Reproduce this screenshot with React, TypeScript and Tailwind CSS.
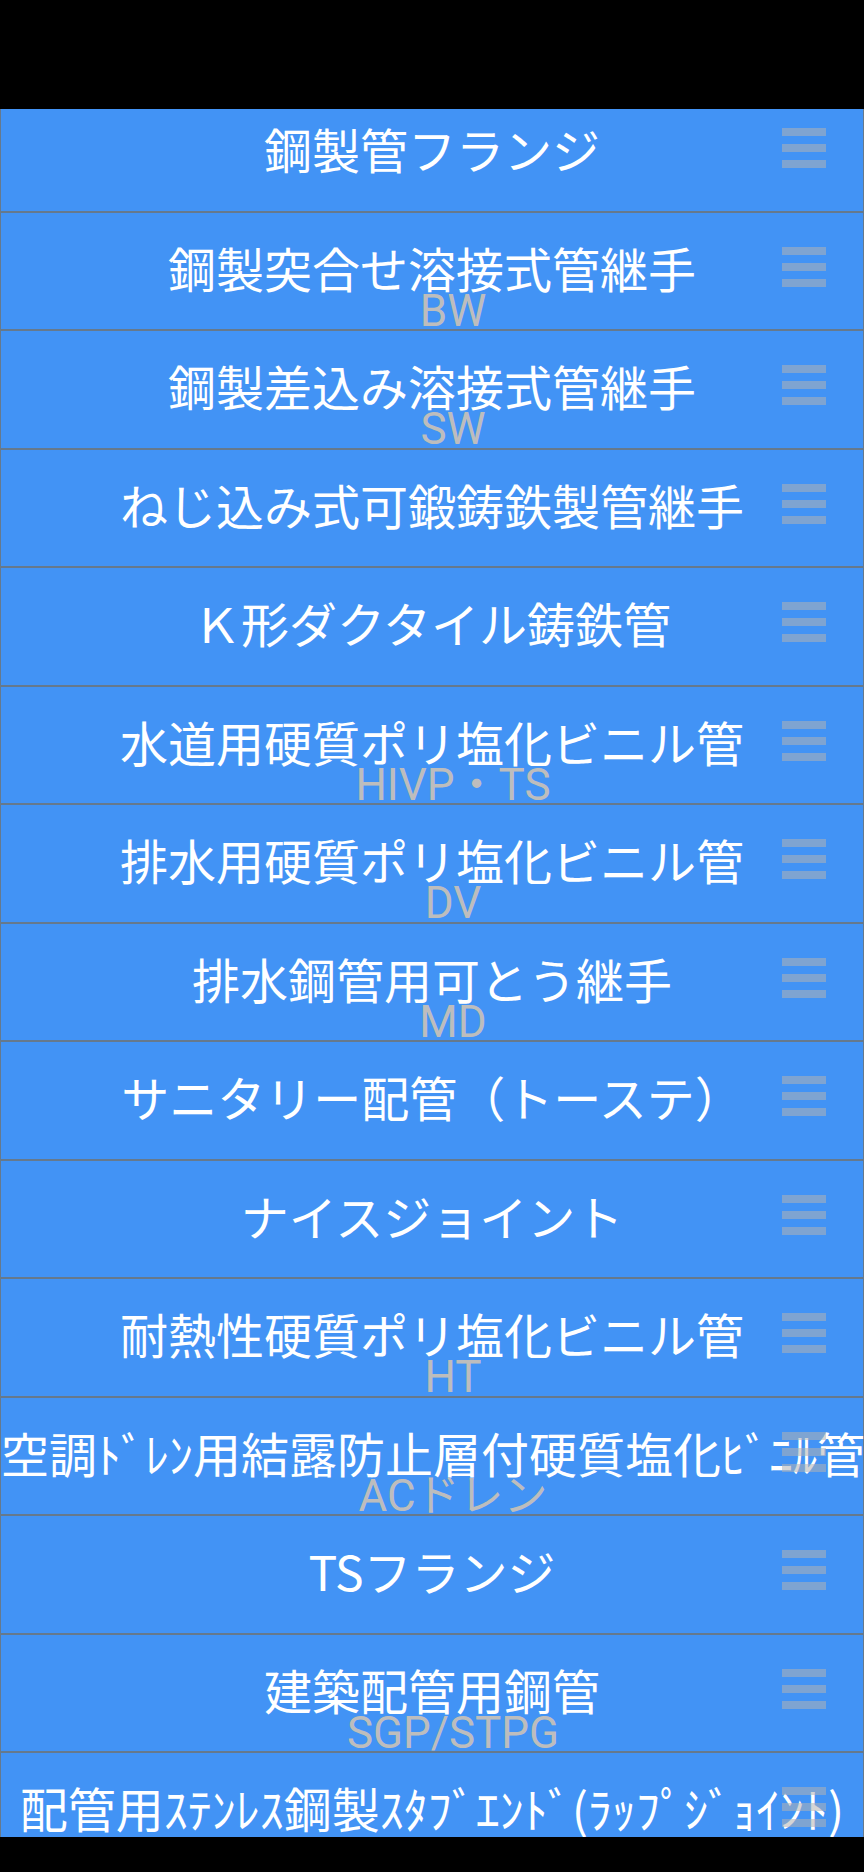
import React from "react";

type Item = {
  title: string;
  sub?: string;
};

const items: Item[] = [
  { title: "鋼製管フランジ" },
  { title: "鋼製突合せ溶接式管継手", sub: "BW" },
  { title: "鋼製差込み溶接式管継手", sub: "SW" },
  { title: "ねじ込み式可鍛鋳鉄製管継手" },
  { title: "Ｋ形ダクタイル鋳鉄管" },
  { title: "水道用硬質ポリ塩化ビニル管", sub: "HIVP・TS" },
  { title: "排水用硬質ポリ塩化ビニル管", sub: "DV" },
  { title: "排水鋼管用可とう継手", sub: "MD" },
  { title: "サニタリー配管（トーステ）" },
  { title: "ナイスジョイント" },
  { title: "耐熱性硬質ポリ塩化ビニル管", sub: "HT" },
  { title: "空調ﾄﾞﾚﾝ用結露防止層付硬質塩化ﾋﾞﾆﾙ管", sub: "ACドレン" },
  { title: "TSフランジ" },
  { title: "建築配管用鋼管", sub: "SGP/STPG" },
  { title: "配管用ｽﾃﾝﾚｽ鋼製ｽﾀﾌﾞｴﾝﾄﾞ(ﾗｯﾌﾟｼﾞｮｲﾝﾄ)" },
];

function DragHandle() {
  return (
    <div className="absolute right-[37px] top-[34px] flex flex-col gap-2">
      <span className="block h-2 w-11 bg-[#b3b3b3]/55" />
      <span className="block h-2 w-11 bg-[#b3b3b3]/55" />
      <span className="block h-2 w-11 bg-[#b3b3b3]/55" />
    </div>
  );
}

function Row({ item }: { item: Item }) {
  return (
    <div className="relative h-[118.5px] shrink-0 border border-[#66798c] bg-[#4293f5] pt-[30px]">
      <div className="whitespace-nowrap text-center font-['Noto_Sans_CJK_JP',sans-serif] text-[48px] leading-[48px] text-white">
        {item.title}
      </div>
      {item.sub && (
        <div className="-mt-[2px] whitespace-nowrap pl-[42px] text-center font-['Roboto','Noto_Sans_CJK_JP',sans-serif] text-[44px] leading-none text-[#bdbdbd]">
          {item.sub}
        </div>
      )}
      <DragHandle />
    </div>
  );
}

export default function App() {
  return (
    <div className="flex h-[1872px] w-[864px] flex-col bg-black">
      <div className="h-[109px] shrink-0 bg-black" />
      <div className="h-[1728px] shrink-0 overflow-hidden">
        <div className="-mt-4 flex flex-col">
          {items.map((item, i) => (
            <Row key={i} item={item} />
          ))}
        </div>
      </div>
      <div className="h-[35px] shrink-0 bg-black" />
    </div>
  );
}
